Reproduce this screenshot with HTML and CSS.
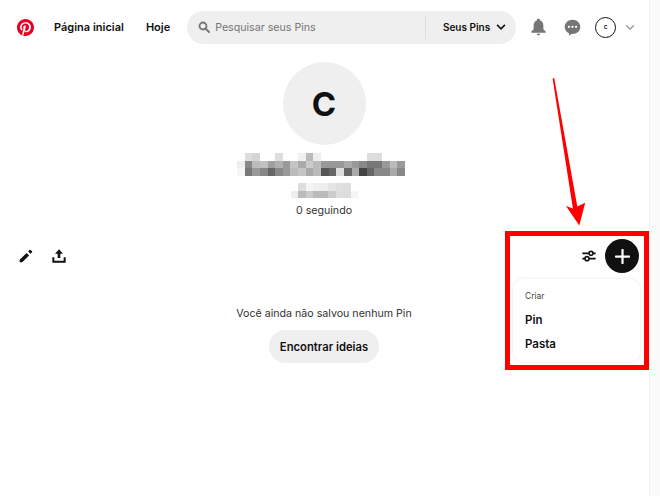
FILE: index.html
```html
<!DOCTYPE html>
<html lang="pt-BR">
<head>
<meta charset="utf-8">
<title>Pinterest</title>
<link rel="stylesheet" href="styles.css">
</head>
<body>
<div class="page">
  <header class="topbar">
    <svg class="logo" viewBox="0 0 24 24"><path fill="#e60023" d="M0 12c0 5.123 3.211 9.497 7.73 11.218-.11-.937-.227-2.482.025-3.566.217-.932 1.401-5.938 1.401-5.938s-.357-.715-.357-1.774c0-1.66.962-2.9 2.161-2.9 1.02 0 1.512.765 1.512 1.682 0 1.025-.653 2.557-.99 3.978-.281 1.189.597 2.159 1.769 2.159 2.123 0 3.756-2.239 3.756-5.471 0-2.861-2.056-4.86-4.991-4.86-3.398 0-5.393 2.549-5.393 5.184 0 1.027.395 2.127.889 2.726a.36.36 0 0 1 .083.343c-.091.378-.293 1.189-.332 1.355-.053.218-.173.265-.4.159-1.492-.694-2.424-2.875-2.424-4.627 0-3.769 2.737-7.229 7.892-7.229 4.144 0 7.365 2.953 7.365 6.899 0 4.117-2.595 7.431-6.199 7.431-1.211 0-2.348-.63-2.738-1.373 0 0-.599 2.282-.744 2.84-.282 1.084-1.064 2.456-1.549 3.235C9.584 23.815 10.77 24 12 24c6.627 0 12-5.373 12-12S18.627 0 12 0 0 5.373 0 12"/></svg>
    <nav class="nav">
      <a class="nav-link nav-home">Página inicial</a>
      <a class="nav-link nav-today">Hoje</a>
    </nav>
    <div class="search">
      <svg class="search-icon" viewBox="0 0 24 24"><circle cx="10" cy="10" r="7" fill="none" stroke="#767676" stroke-width="3.6"/><path d="M15.5 15.5 22 22" stroke="#767676" stroke-width="4" stroke-linecap="round"/></svg>
      <span class="search-text">Pesquisar seus Pins</span>
      <span class="search-divider"></span>
      <span class="search-scope">Seus Pins</span>
      <svg class="scope-chevron" viewBox="0 0 14 10"><path d="M1.500 2 7 7.500 12.500 2" fill="none" stroke="#111" stroke-width="2.200"/></svg>
    </div>
    <div class="actions">
      <svg class="bell" viewBox="0 0 20 24"><path fill="#767676" d="M10 1c1.300 0 2.200.9 2.300 2.200C15.200 4.100 16.500 6.700 16.500 10v5l3 3v1.500H.5V18l3-3v-5c0-3.300 1.300-5.900 4.200-6.800C7.800 1.900 8.700 1 10 1z"/><path fill="#767676" d="M7.500 21h5c-.3 1.300-1.300 2-2.500 2s-2.200-.7-2.500-2z"/></svg>
      <svg class="chat" viewBox="0 0 24 24"><path fill="#767676" d="M12 1c6.200 0 11 4.500 11 10.200S18.200 21 12 21h-1.500L7 23.800V20.100C3.400 18.500 1 15.200 1 11.200 1 5.500 5.800 1 12 1z"/><circle cx="7" cy="11" r="1.600" fill="#fff"/><circle cx="12" cy="11" r="1.600" fill="#fff"/><circle cx="17" cy="11" r="1.600" fill="#fff"/></svg>
      <span class="mini-avatar">C</span>
      <svg class="menu-chevron" viewBox="0 0 14 10"><path d="M1.500 2 7 7.500 12.500 2" fill="none" stroke="#8a8a8a" stroke-width="1.700"/></svg>
    </div>
  </header>

  <main class="main">
    <section class="profile">
      <div class="avatar">C</div>
      <svg class="mosaic-name" viewBox="0 0 22 3" shape-rendering="crispEdges">
        <rect x="1" width="1" height="1" fill="#ddd"/><rect x="2" width="1" height="1" fill="#d5d5d5"/><rect x="5" width="1" height="1" fill="#ddd"/><rect x="8" width="1" height="1" fill="#f0f0f0"/><rect x="9" width="1" height="1" fill="#bbb"/><rect x="10" width="1" height="1" fill="#eee"/><rect x="17" width="2" height="1" fill="#ddd"/>
        <rect x="0" y="1" width="1" height="1" fill="#eee"/><rect x="1" y="1" width="1" height="1" fill="#888"/><rect x="2" y="1" width="1" height="1" fill="#bbb"/><rect x="3" y="1" width="1" height="1" fill="#c0c0c0"/><rect x="4" y="1" width="1" height="1" fill="#a0a0a0"/><rect x="5" y="1" width="1" height="1" fill="#b0b0b0"/><rect x="6" y="1" width="1" height="1" fill="#999"/><rect x="7" y="1" width="1" height="1" fill="#c5c5c5"/><rect x="8" y="1" width="1" height="1" fill="#aaa"/><rect x="9" y="1" width="1" height="1" fill="#ccc"/><rect x="10" y="1" width="1" height="1" fill="#bbb"/><rect x="11" y="1" width="3" height="1" fill="#999"/><rect x="14" y="1" width="1" height="1" fill="#aaa"/><rect x="15" y="1" width="1" height="1" fill="#999"/><rect x="16" y="1" width="1" height="1" fill="#888"/><rect x="17" y="1" width="2" height="1" fill="#777"/><rect x="19" y="1" width="1" height="1" fill="#999"/><rect x="20" y="1" width="1" height="1" fill="#bbb"/><rect x="21" y="1" width="1" height="1" fill="#999"/>
        <rect x="0" y="2" width="1" height="1" fill="#f5f5f5"/><rect x="1" y="2" width="1" height="1" fill="#777"/><rect x="2" y="2" width="1" height="1" fill="#999"/><rect x="3" y="2" width="1" height="1" fill="#888"/><rect x="4" y="2" width="1" height="1" fill="#666"/><rect x="5" y="2" width="1" height="1" fill="#888"/><rect x="6" y="2" width="1" height="1" fill="#999"/><rect x="7" y="2" width="1" height="1" fill="#bbb"/><rect x="8" y="2" width="1" height="1" fill="#c5c5c5"/><rect x="9" y="2" width="1" height="1" fill="#aaa"/><rect x="10" y="2" width="1" height="1" fill="#bbb"/><rect x="11" y="2" width="1" height="1" fill="#555"/><rect x="12" y="2" width="1" height="1" fill="#666"/><rect x="13" y="2" width="1" height="1" fill="#ddd"/><rect x="14" y="2" width="1" height="1" fill="#666"/><rect x="15" y="2" width="1" height="1" fill="#aaa"/><rect x="16" y="2" width="1" height="1" fill="#444"/><rect x="17" y="2" width="1" height="1" fill="#666"/><rect x="18" y="2" width="2" height="1" fill="#888"/><rect x="20" y="2" width="1" height="1" fill="#aaa"/><rect x="21" y="2" width="1" height="1" fill="#888"/>
      </svg>
      <svg class="mosaic-user" viewBox="0 0 9 2" shape-rendering="crispEdges">
        <rect x="1" width="1" height="1" fill="#ddd"/><rect x="2" width="1" height="1" fill="#f5f5f5"/><rect x="3" width="1" height="1" fill="#f0f0f0"/><rect x="4" width="1" height="1" fill="#eee"/><rect x="5" width="1" height="1" fill="#e5e5e5"/><rect x="6" width="1" height="1" fill="#e0e0e0"/><rect x="7" width="1" height="1" fill="#ddd"/>
        <rect x="0" y="1" width="1" height="1" fill="#eee"/><rect x="1" y="1" width="1" height="1" fill="#bbb"/><rect x="2" y="1" width="1" height="1" fill="#ccc"/><rect x="3" y="1" width="2" height="1" fill="#bbb"/><rect x="5" y="1" width="1" height="1" fill="#ccc"/><rect x="6" y="1" width="2" height="1" fill="#ddd"/><rect x="8" y="1" width="1" height="1" fill="#f5f5f5"/>
      </svg>
      <p class="following">0 seguindo</p>
    </section>

    <section class="toolbar">
      <div class="tools">
        <svg class="tool" viewBox="0 0 24 24"><path fill="#111" d="M2.500 17.800V21.500h3.700L16.600 11.100l-3.700-3.700L2.500 17.800zM20.900 6.800a1.300 1.300 0 0 0 0-1.800l-1.900-1.900a1.300 1.300 0 0 0-1.800 0l-2 2 3.700 3.700 2-2z"/></svg>
        <svg class="tool" viewBox="0 0 24 24"><path fill="#111" d="M12 2 18 8.500h-4V15h-4V8.500H6L12 2z"/><path fill="none" stroke="#111" stroke-width="3" d="M3.500 14v6.500h17V14"/></svg>
      </div>
      <div class="create">
        <svg class="sliders" viewBox="0 0 24 24"><g fill="none" stroke="#111" stroke-width="2.400"><path d="M2 8h20M2 16h20"/><circle cx="15" cy="8" r="3" fill="#fff"/><circle cx="9" cy="16" r="3" fill="#fff"/></g></svg>
        <span class="plus"><svg class="plus-icon" viewBox="0 0 16 16"><path d="M8 1v14M1 8h14" stroke="#fff" stroke-width="2.400" stroke-linecap="round"/></svg></span>
        <div class="menu">
          <span class="menu-title">Criar</span>
          <span class="menu-item">Pin</span>
          <span class="menu-item">Pasta</span>
        </div>
      </div>
    </section>

    <section class="empty">
      <p class="empty-text">Você ainda não salvou nenhum Pin</p>
      <span class="find">Encontrar ideias</span>
    </section>
  </main>

  <aside class="scroll-strip"></aside>
  <div class="highlight"></div>
  <svg class="arrow" viewBox="0 0 660 496"><path fill="#fe0000" d="M552.600 78.500 554.200 78.100 577.300 206.600 585.200 202.700 579.300 225.500 566 206 572.900 208.600z"/></svg>
</div>
</body>
</html>
```
FILE: styles.css
```css
* { box-sizing: border-box; }
html, body { margin: 0; padding: 0; background: #fff; }
body { font-family: Inter, "Liberation Sans", sans-serif; color: #111; overflow: hidden; }
p { margin: 0; }

.page { position: relative; width: 660px; height: 496px; overflow: hidden; }

.topbar { display: flex; align-items: center; height: 54px; width: 649px; padding-left: 17px; }
.logo { width: 17px; height: 17px; flex: none; }
.nav { display: flex; align-items: center; margin-left: 20px; }
.nav-link { font-size: 11px; font-weight: 600; color: #111; white-space: nowrap; }
.nav-today { margin-left: 22px; }

.search { display: flex; align-items: center; width: 329px; height: 33px; margin-left: 17px; padding: 0 10px 0 11px; border-radius: 17px; background: #efefef; }
.search-icon { width: 12px; height: 12px; flex: none; }
.search-text { width: 214px; margin-left: 5px; font-size: 10.650px; color: #767676; white-space: nowrap; }
.search-divider { width: 1px; height: 24px; flex: none; background: #dcdcdc; }
.search-scope { margin-left: 17px; font-size: 10px; font-weight: 600; white-space: nowrap; }
.scope-chevron { width: 10px; height: 8px; margin-left: 6px; flex: none; }

.actions { display: flex; align-items: center; margin-left: 15px; }
.bell { width: 15px; height: 18px; flex: none; }
.chat { width: 17px; height: 17px; margin-left: 18px; flex: none; }
.mini-avatar { display: flex; align-items: center; justify-content: center; width: 21px; height: 21px; margin-left: 14px; border: 1.500px solid #111; border-radius: 50%; font-size: 5px; font-weight: 700; }
.menu-chevron { width: 10px; height: 7px; margin-left: 9px; flex: none; }

.main { width: 648px; }
.profile { display: flex; flex-direction: column; align-items: center; padding-top: 8px; }
.avatar { display: flex; align-items: center; justify-content: center; width: 83px; height: 83px; border-radius: 50%; background: #efefef; font-size: 33px; font-weight: 700; color: #111; }
.mosaic-name { display: block; width: 168px; height: 23px; margin: 8px 0 0 -6px; }
.mosaic-user { display: block; width: 69px; height: 15px; margin-top: 7px; }
.following { margin-top: 6px; font-size: 10.650px; line-height: 14px; color: #333; }

.toolbar { display: flex; align-items: center; justify-content: space-between; height: 34px; margin-top: 21px; padding-left: 18px; padding-right: 9px; }
.tools { display: flex; align-items: center; gap: 17px; }
.tool { width: 16px; height: 16px; flex: none; }
.create { position: relative; display: flex; align-items: center; gap: 8px; }
.sliders { width: 16px; height: 16px; flex: none; }
.plus { display: flex; align-items: center; justify-content: center; width: 34px; height: 34px; border-radius: 50%; background: #111; }
.plus-icon { width: 15px; height: 15px; }

.menu { position: absolute; right: -1px; top: 40px; display: flex; flex-direction: column; width: 127px; height: 83px; padding: 12px 12px 0; border-radius: 11px; background: #fff; box-shadow: 0 0 4px rgba(0,0,0,.09); }
.menu-title { font-size: 8.500px; line-height: 11px; color: #444; }
.menu-item { margin-top: 11px; font-size: 11.500px; line-height: 13px; font-weight: 600; color: #111; }
.menu-title + .menu-item { margin-top: 12px; }

.empty { display: flex; flex-direction: column; align-items: center; margin-top: 34px; }
.empty-text { font-size: 10.650px; line-height: 14px; color: #333; }
.find { display: flex; align-items: center; justify-content: center; width: 110px; height: 33px; margin-top: 9px; border-radius: 17px; background: #efefef; font-size: 11.250px; font-weight: 600; color: #111; }

.scroll-strip { position: absolute; top: 0; right: 0; bottom: 0; width: 11px; background: #fbfbfb; border-left: 1px solid #f3f3f3; }
.highlight { position: absolute; left: 505px; top: 231px; width: 144px; height: 139px; border: 5px solid #fe0000; }
.arrow { position: absolute; left: 0; top: 0; width: 660px; height: 496px; pointer-events: none; }
```
